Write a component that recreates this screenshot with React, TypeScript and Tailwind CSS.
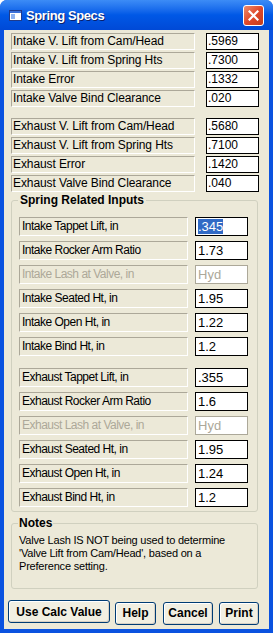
import React from "react";

const topRows = [
  { label: "Intake V. Lift from Cam/Head", value: ".5969" },
  { label: "Intake V. Lift from Spring Hts", value: ".7300" },
  { label: "Intake Error", value: ".1332" },
  { label: "Intake Valve Bind Clearance", value: ".020" },
];

const topRows2 = [
  { label: "Exhaust V. Lift from Cam/Head", value: ".5680" },
  { label: "Exhaust V. Lift from Spring Hts", value: ".7100" },
  { label: "Exhaust Error", value: ".1420" },
  { label: "Exhaust Valve Bind Clearance", value: ".040" },
];

const intakeRows = [
  { label: "Intake Tappet Lift, in", value: ".345", selected: true },
  { label: "Intake Rocker Arm Ratio", value: "1.73" },
  { label: "Intake Lash at Valve, in", value: "Hyd", disabled: true },
  { label: "Intake Seated Ht, in", value: "1.95" },
  { label: "Intake Open Ht, in", value: "1.22" },
  { label: "Intake Bind Ht, in", value: "1.2" },
];

const exhaustRows = [
  { label: "Exhaust Tappet Lift, in", value: ".355" },
  { label: "Exhaust Rocker Arm Ratio", value: "1.6" },
  { label: "Exhaust Lash at Valve, in", value: "Hyd", disabled: true },
  { label: "Exhaust Seated Ht, in", value: "1.95" },
  { label: "Exhaust Open Ht, in", value: "1.24" },
  { label: "Exhaust Bind Ht, in", value: "1.2" },
];

type Row = { label: string; value: string; selected?: boolean; disabled?: boolean };

const TopRow = ({ row }: { row: Row }) => (
  <div className="flex items-center h-[17px]">
    <div className="w-[184px] h-[17px] border border-t-[#ACA899] border-l-[#ACA899] border-b-white border-r-white pl-[1px] text-[12px] tracking-[-0.1px] leading-[15px] text-black">
      {row.label}
    </div>
    <div className="ml-[11px] w-[53px] h-[17px] bg-white border border-black pl-[1px] text-[12px] leading-[15px] text-black">
      {row.value}
    </div>
  </div>
);

const InputRow = ({ row }: { row: Row }) => (
  <div className="flex items-center h-[19px]">
    <div
      className={`w-[169px] h-[19px] border border-t-[#ACA899] border-l-[#ACA899] border-b-white border-r-white pl-[2px] text-[12px] tracking-[-0.5px] leading-[17px] ${
        row.disabled ? "text-[#ACA899]" : "text-black"
      }`}
    >
      {row.label}
    </div>
    <div
      className={`ml-[7px] w-[53px] h-[19px] bg-white border pl-[2px] text-[13px] leading-[17px] ${
        row.disabled ? "border-[#ACA899] text-[#ACA899]" : "border-black text-black"
      }`}
    >
      {row.selected ? (
        <span className="bg-[#316AC5] text-white">{row.value}</span>
      ) : (
        row.value
      )}
    </div>
  </div>
);

const Button = ({ label, w }: { label: string; w: string }) => (
  <button
    className={`${w} h-[23px] bg-[#F1EFE2] border border-[#003C74] rounded-[3px] text-[12px] font-bold text-black shadow-[inset_-1px_-1px_0_#D6D0C5,inset_1px_1px_0_#FFFFFF]`}
  >
    {label}
  </button>
);

export default function App() {
  return (
    <div
      className="w-[273px] h-[633px] flex flex-col bg-[#0A52E0] rounded-t-[7px] overflow-hidden"
      style={{ fontFamily: '"Liberation Sans", Arial, sans-serif' }}
    >
      {/* Title bar */}
      <div className="h-[30px] flex items-center px-[9px] bg-gradient-to-b from-[#3C8CF6] via-[#0058E6] to-[#0049D6] shrink-0">
        <svg width="13" height="11" viewBox="0 0 13 11" className="mr-[4px]">
          <rect x="0.5" y="0.5" width="12" height="10" fill="#FFFFFF" stroke="#1F3A8A" />
          <rect x="1" y="1" width="11" height="2" fill="#3A6FD8" />
          <rect x="2" y="4" width="4" height="5" fill="#8FB3F0" />
        </svg>
        <span className="text-white font-bold text-[13px] tracking-[-0.4px] pt-[1px] [text-shadow:1px_1px_0_#0A1F6B]">
          Spring Specs
        </span>
        <div className="ml-auto w-[21px] h-[21px] rounded-[3px] border border-white bg-gradient-to-br from-[#EB8B6B] via-[#E0482A] to-[#C43D1A] flex items-center justify-center">
          <svg width="11" height="11" viewBox="0 0 11 11">
            <path d="M1.5 1.5 L9.5 9.5 M9.5 1.5 L1.5 9.5" stroke="white" strokeWidth="2.2" strokeLinecap="square" />
          </svg>
        </div>
      </div>

      {/* Body */}
      <div className="flex-1 mx-[4px] mb-[4px] bg-[#ECE9D8] flex flex-col pl-[7px] pt-[3px]">
        <div className="flex flex-col gap-[2px]">
          {topRows.map((r, i) => (
            <TopRow key={i} row={r} />
          ))}
        </div>
        <div className="flex flex-col gap-[2px] mt-[11px]">
          {topRows2.map((r, i) => (
            <TopRow key={i} row={r} />
          ))}
        </div>

        {/* Spring Related Inputs */}
        <div className="relative mt-[8px] w-[247px] h-[312px] shrink-0 border border-[#D0D0BF] rounded-[3px] pl-[7px] pt-[16px]">
          <span className="absolute left-[6px] top-[-8px] bg-[#ECE9D8] px-[2px] text-[12px] font-bold leading-[15px] text-black">
            Spring Related Inputs
          </span>
          <div className="flex flex-col gap-[5px]">
            {intakeRows.map((r, i) => (
              <InputRow key={i} row={r} />
            ))}
          </div>
          <div className="flex flex-col gap-[5px] mt-[12px]">
            {exhaustRows.map((r, i) => (
              <InputRow key={i} row={r} />
            ))}
          </div>
        </div>

        {/* Notes */}
        <div className="relative mt-[11px] w-[247px] h-[66px] shrink-0 border border-[#D0D0BF] rounded-[3px] pl-[7px] pt-[10px]">
          <span className="absolute left-[6px] top-[-8px] bg-[#ECE9D8] px-[1px] text-[12px] font-bold leading-[15px] text-black">
            Notes
          </span>
          <p className="text-[11px] tracking-[-0.2px] leading-[13px] text-black whitespace-nowrap">
            Valve Lash IS NOT being used to determine
            <br />
            'Valve Lift from Cam/Head', based on a
            <br />
            Preference setting.
          </p>
        </div>

        {/* Buttons */}
        <div className="flex mt-[11px] -ml-[3px]">
          <Button label="Use Calc Value" w="w-[102px]" />
          <div className="ml-[5px]">
            <Button label="Help" w="w-[41px]" />
          </div>
          <div className="ml-[7px]">
            <Button label="Cancel" w="w-[50px]" />
          </div>
          <div className="ml-[6px]">
            <Button label="Print" w="w-[40px]" />
          </div>
        </div>
      </div>
    </div>
  );
}
